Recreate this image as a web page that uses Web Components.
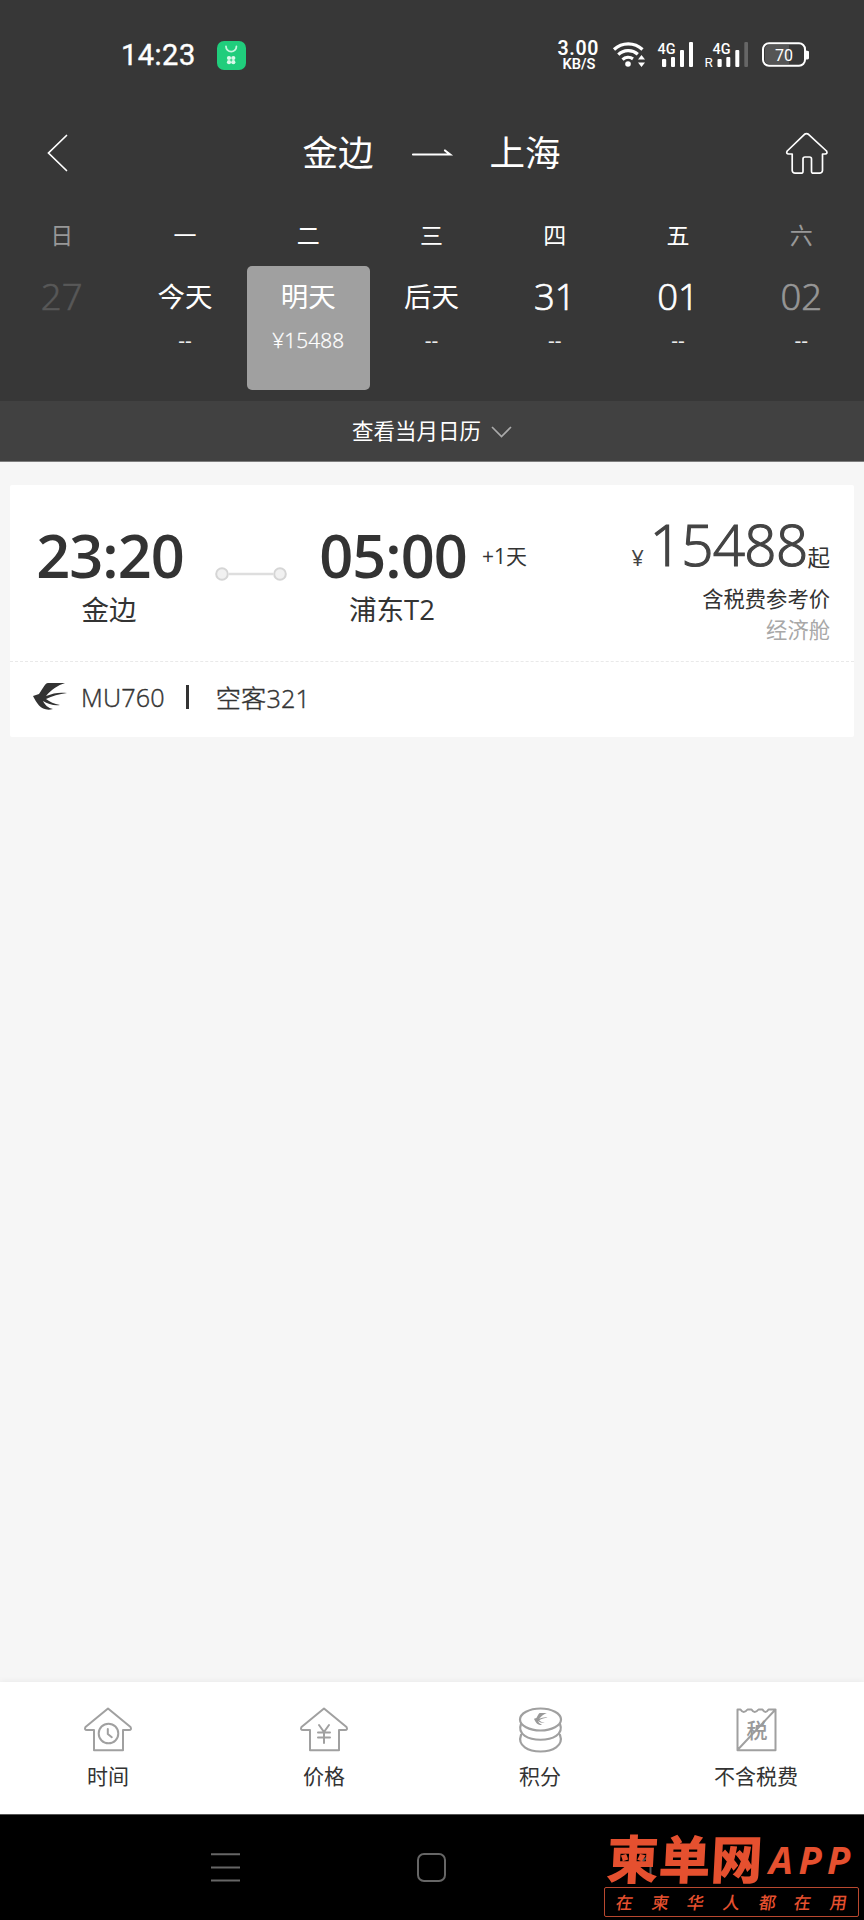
<!DOCTYPE html>
<html lang="zh-CN">
<head>
<meta charset="utf-8">
<title>航班查询</title>
<style>
html,body{margin:0;padding:0}
body{width:864px;height:1920px;overflow:hidden;background:#f6f6f6;color:#333;
font-family:"Open Sans","Noto Sans CJK SC",sans-serif}
</style>
</head>
<body>
<flight-app></flight-app>
<script>
const define=(name,css,html)=>customElements.define(name,class extends HTMLElement{
  constructor(){
    super();
    const t=document.createElement('template');
    t.innerHTML=`<style>*{box-sizing:border-box}svg{display:block;overflow:visible}${css}</style>${typeof html==='function'?html(this):html}`;
    this.attachShadow({mode:'open'}).appendChild(t.content.cloneNode(true));
  }
});
const swallow='M0 13 6 11 C11 4 12 0 15 0 L32 0 C25 2 18 7 13 13 C20 10 27 9 34 10 C26 11 19 13 13 16 C17 19 21 21 27 22 C21 23 15 21 10 18 C12 22 15 25 20 26 C9 29 4 21 0 13 Z';

define('status-bar',`
:host{display:flex;height:110px;padding:0 52px 0 121px;align-items:center;color:#fff}
.time{font:400 29px/40px Roboto,"Open Sans",sans-serif;letter-spacing:.5px;width:96px;-webkit-text-stroke:.4px #fff}
.right{margin-left:auto}
text{font-family:Roboto,"Open Sans",sans-serif;fill:#fff}`,`
<span class="time">14:23</span>
<svg width="29" height="29" viewBox="0 0 29 29"><rect width="29" height="29" rx="7" fill="#20cd7c"/><path d="M9 5.500a5.200 5.200 0 0 0 10.400 0" fill="none" stroke="#c5f5df" stroke-width="1.800" stroke-linecap="round"/><g fill="#d9f9ea"><circle cx="12" cy="17" r="2.100"/><circle cx="16.300" cy="17" r="2.100"/><circle cx="12" cy="21.200" r="2.100"/><circle cx="16.300" cy="21.200" r="2.100"/></g></svg>
<svg class="right" width="255" height="36" viewBox="557 37 255 36">
<text x="557.500" y="54.500" font-size="19.500" font-weight="600" textLength="41">3.00</text>
<text x="562.500" y="69" font-size="14.500" font-weight="600" textLength="33" lengthAdjust="spacingAndGlyphs">KB/S</text>
<g fill="none" stroke="#fff" stroke-width="3.200"><path d="M614 49.500a21 21 0 0 1 28.500 0"/><path d="M618.300 54.700a14.500 14.500 0 0 1 19.500-.5"/><path d="M622.500 59.600a8.500 8.500 0 0 1 10.500-.8"/></g>
<circle cx="628" cy="64" r="2.800" fill="#fff"/><path d="m641.500 55 3.500 4.500h-7zM641.500 67l3.500-4.500h-7z" fill="#fff"/>
<text x="657.500" y="54" font-size="15.500" font-weight="500" textLength="18" lengthAdjust="spacingAndGlyphs">4G</text>
<g fill="#fff"><rect x="662" y="59" width="4.200" height="8" rx="1"/><rect x="671" y="57" width="4" height="10" rx="1"/><rect x="680" y="50" width="4" height="17" rx="1"/><rect x="689" y="42" width="4" height="25" rx="1"/></g>
<text x="712.500" y="54" font-size="15.500" font-weight="500" textLength="18" lengthAdjust="spacingAndGlyphs">4G</text>
<text x="704.500" y="67" font-size="13.500">R</text>
<g fill="#fff"><rect x="717.500" y="59" width="4.200" height="8" rx="1"/><rect x="726.300" y="57" width="4" height="10" rx="1"/><rect x="735.300" y="50" width="4" height="17" rx="1"/><rect x="744.300" y="42" width="3.700" height="25" rx="1" fill="#666"/></g>
<rect x="763" y="43.300" width="42" height="22.500" rx="6" fill="none" stroke="#fff" stroke-width="2"/><path d="M769 45h20v19h-20q-4 0-4-4V49q0-4 4-4z" fill="#555"/><path d="M806 50.500q3 0 3 1.500v6q0 1.500-3 1.500z" fill="#fff"/>
<text x="775" y="60.500" font-size="16" textLength="18">70</text>
</svg>`);

define('title-bar',`
:host{display:flex;height:86px;padding:0 37px 0 47px;align-items:center;color:#fff}
.route{flex:1;display:flex;justify-content:center;align-items:center;gap:38px;font-size:35.500px;line-height:48px;padding:0 11px 3px 0}
.route svg{margin-top:2px}
.back{width:41px}`,`
<svg class="back" width="41" height="38" viewBox="0 0 41 38"><path d="M19.500 1.500 1.500 19l18 17.500" fill="none" stroke="#fff" stroke-width="1.700" stroke-linecap="round"/></svg>
<div class="route"><slot name="from"></slot><svg width="40" height="10" viewBox="0 0 40 10"><path d="M1 6.500H38l-5-4" fill="none" stroke="#fff" stroke-width="2.200" stroke-linecap="round"/></svg><slot name="to"></slot></div>
<svg width="41" height="41" viewBox="0 0 41 41"><path d="M18.500 1.300 1.200 18q-1.500 2.800 1.500 3h3.500v16.500q.3 2.700 3 2.700h7q.8 0 .8-2V26q0-2 2-2h4.500q2 0 2 2v12.200q0 2 .8 2h7q3 0 3.200-2.700V21h2.500q3-.2 1.500-3L22.500 1.300q-2-1.500-4 0z" fill="none" stroke="#fff" stroke-width="1.700" stroke-linejoin="round"/></svg>`);

define('day-cell',`
:host{display:block;flex:1 1 0;text-align:center;color:#fff}
.wk{padding-top:8px;font-size:23px;line-height:62px}
.box{height:124px;border-radius:5px}
.date{font-size:27.500px;line-height:62px}
.num{font-size:36.500px;font-weight:300;line-height:60px;padding-bottom:2px;-webkit-text-stroke:.7px currentColor}
.price{font-size:21px;line-height:26px;opacity:.9;position:relative;top:-1px}
:host([selected]) .box{background:#a0a0a0}
:host([selected]) .price{opacity:1;font-weight:300;font-size:20.800px;letter-spacing:.1px;-webkit-text-stroke:.3px #fff}
:host([dim]) .wk{color:#989898}
:host([dim]) .date{color:#969696}
:host([past]) .date{color:#585858}`,el=>`
<div class="wk">${el.getAttribute('week')}</div><div class="box"><div class="date ${/^\d/.test(el.getAttribute('date'))?'num':''}">${el.getAttribute('date')}</div><div class="price">${el.getAttribute('price')||''}</div></div>`);

define('week-strip',`:host{display:flex;height:205px;padding-right:1px}`,`
<day-cell week="日" date="27" dim past></day-cell><day-cell week="一" date="今天" price="--"></day-cell><day-cell week="二" date="明天" price="¥15488" selected></day-cell><day-cell week="三" date="后天" price="--"></day-cell><day-cell week="四" date="31" price="--"></day-cell><day-cell week="五" date="01" price="--"></day-cell><day-cell week="六" date="02" price="--" dim></day-cell>`);

define('month-toggle',`
:host{display:flex;height:61px;background:#414141;border-bottom:1px solid #7d7d7d;color:#fff;font-size:21.500px;line-height:30px;padding-bottom:1px;justify-content:center;align-items:center;gap:10px;box-sizing:border-box}
svg{margin-top:2px}`,`
<slot></slot><svg width="21" height="12" viewBox="0 0 21 12"><path d="m1 1 9.500 9.500L20 1" fill="none" stroke="#aaa" stroke-width="1.700"/></svg>`);

define('time-stop',`
:host{display:block;width:160px;text-align:center}
.t{font-size:59.500px;line-height:66px;margin-top:-1px;font-weight:600;letter-spacing:-1px;white-space:nowrap;color:#333}
.c{font-size:27.500px;line-height:40px;padding-top:2px;white-space:nowrap;margin-left:-2px}`,`
<div class="t"><slot name="time"></slot></div><div class="c"><slot></slot></div>`);

define('flight-card',`
:host{display:block;background:#fff;height:252px;border-radius:2px}
.top{height:177px;border-bottom:1px dashed #e9e9e9;display:flex;padding:38px 24px 0 20px}
.link{margin:44px 26px 0 25px}
.plus{font-size:21px;line-height:67px;margin-left:9px}
.fare{margin-left:auto;text-align:right;margin-top:-5px}
.p{height:65px;line-height:53px;white-space:nowrap;color:#444}
.y{font-size:21.500px;margin-right:6px}.n{font-size:56.500px;font-weight:300;letter-spacing:-.7px;-webkit-text-stroke:1.200px #444}.q{font-size:22.500px;color:#333}
.tax{font-size:21.300px;line-height:32px}.cabin{font-size:21.300px;line-height:30px;color:#a8a8a8}
.bot{height:75px;display:flex;align-items:center;padding:0 23px 6px;font-size:25.200px;white-space:nowrap}
.bot svg{margin-right:14px}.bar{width:3px;height:24px;background:#333;margin:0 27px 0 21px}
.light{font-weight:300;-webkit-text-stroke:.4px #333;letter-spacing:.15px}
.cn{-webkit-text-stroke:.15px #333}`,`
<div class="top"><time-stop><span slot="time">23:20</span>金边</time-stop>
<svg class="link" width="72" height="14" viewBox="0 0 72 14"><path d="M14 7h44" stroke="#dedede" stroke-width="2.500"/><g fill="#f1f1f1" stroke="#d5d5d5" stroke-width="2"><circle cx="7" cy="7" r="5.800"/><circle cx="65" cy="7" r="5.800"/></g></svg>
<time-stop><span slot="time">05:00</span>浦东T2</time-stop><span class="plus">+1天</span>
<div class="fare"><div class="p"><span class="y">¥</span><span class="n">15488</span><span class="q">起</span></div><div class="tax">含税费参考价</div><div class="cabin">经济舱</div></div></div>
<div class="bot"><svg width="34" height="28" viewBox="0 0 34 28"><path d="${swallow}" fill="#333"/></svg><span class="light">MU760</span><i class="bar"></i><span class="light">空客321</span></div>`);

const icons={
time:`<g stroke-width="2"><path d="M24 1.500 1.500 20q-1.500 3 1.500 3h7v20.300h29V23h6q3 0 1.500-3z"/><circle cx="24.500" cy="26.500" r="9.800"/><path d="M23.800 22v5l4 3.200"/></g>`,
price:`<g stroke-width="2"><path d="M24 1.500 1.500 20q-1.500 3 1.500 3h7v20.300h29V23h6q3 0 1.500-3z"/><path d="m19 18 5 7 5-7M24 25v11M18 25.500h12M18 30.500h12"/></g>`,
points:`<g stroke-width="2.200"><ellipse cx="24.500" cy="12.500" rx="20.500" ry="11"/><path d="M5 17C-3 38 52 38 44 17M5 28C-3 50 52 50 44 28"/></g><path d="${swallow}" transform="translate(18 6) scale(.4 .45)" fill="#999" stroke="none"/>`,
tax:`<g stroke-width="2"><path d="M5.500 2.500h3q3 5 7 0h4q3 5 7 0h4q3 5 6 0h7v40.800h-38zM5.500 43 43.500 2.500"/></g><text x="14.500" y="31" font-size="21" font-family="Noto Sans CJK SC" font-weight="500" fill="#999" stroke="none">税</text>`};
define('tab-item',`
:host{flex:1;display:flex;flex-direction:column;align-items:center;padding-top:25px;font-size:21px;line-height:36px;color:#333}
svg{margin-bottom:6px}`,el=>`
<svg width="48" height="45" viewBox="0 0 48 45" fill="none" stroke="#a0a0a0" stroke-linejoin="round" stroke-linecap="round">${icons[el.getAttribute('icon')]}</svg><slot></slot>`);
define('tab-bar',`:host{display:flex;height:132px;background:#fff;box-shadow:0 -1px 6px rgba(0,0,0,.05)}`,`
<tab-item icon="time">时间</tab-item><tab-item icon="price">价格</tab-item><tab-item icon="points">积分</tab-item><tab-item icon="tax">不含税费</tab-item>`);

define('site-mark',`
:host{display:block;width:255px;color:#e5502f;font-family:"Noto Sans CJK SC",sans-serif}
.a{display:flex;height:58px;align-items:center;padding-left:3px;white-space:nowrap}
.name{font-size:52px;font-weight:900;line-height:58px;transform:translateY(-1px) skewX(-3deg)}
.app{font:italic 700 38px/58px "Open Sans",sans-serif;letter-spacing:5.500px;margin:2px 0 0 6px}
.b{height:30px;border:1px solid #b9482f;border-radius:2px;display:flex;justify-content:space-between;align-items:center;padding:0 11px;font-size:17px;font-weight:500;line-height:28px}
.b span{transform:skewX(-9deg)}`,`
<div class="a"><span class="name">柬单网</span><span class="app">APP</span></div>
<div class="b">${[...'在柬华人都在用'].map(c=>`<span>${c}</span>`).join('')}</div>`);

define('nav-bar',`
:host{display:flex;position:relative;height:106px;background:#000;border-top:1px solid #555;padding:38px 0 0 211px;box-sizing:border-box}
.sq{margin-left:177px}.back{margin-left:189px}
site-mark{position:absolute;left:604px;top:14px}`,`
<svg width="29" height="29" viewBox="0 0 29 29"><path d="M0 1.200h29M0 14.500h29M0 27.500h29" stroke="#666" stroke-width="2"/></svg>
<svg class="sq" width="29" height="29" viewBox="0 0 29 29"><rect x="1" y="1" width="27" height="27" rx="6" fill="none" stroke="#666" stroke-width="2"/></svg>
<svg class="back" width="18" height="29" viewBox="0 0 18 29"><path d="M15.500 2v25L2 16q-2-2 0-4z" fill="none" stroke="#555" stroke-width="2"/></svg>
<site-mark></site-mark>`);

define('flight-app',`
:host{display:flex;flex-direction:column;width:864px;height:1920px;background:#f6f6f6}
header{background:#373737}
main{flex:1;padding:23px 10px}`,`
<header><status-bar></status-bar><title-bar><span slot="from">金边</span><span slot="to">上海</span></title-bar><week-strip></week-strip><month-toggle>查看当月日历</month-toggle></header>
<main><flight-card></flight-card></main><tab-bar></tab-bar><nav-bar></nav-bar>`);
</script>
</body>
</html>
